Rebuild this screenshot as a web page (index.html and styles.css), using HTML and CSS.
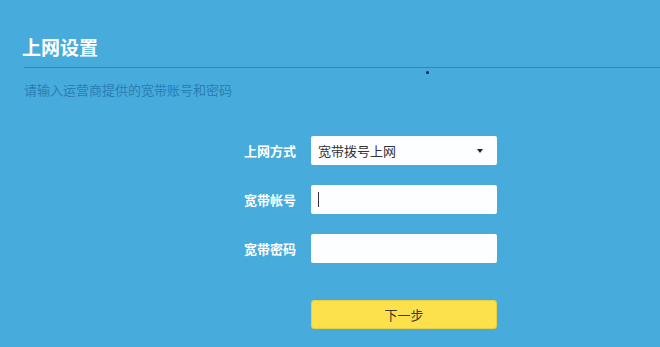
FILE: index.html
```html
<!DOCTYPE html>
<html lang="zh-CN">
<head>
<meta charset="utf-8">
<title>上网设置</title>
<link rel="stylesheet" href="styles.css">
</head>
<body>
<div class="page">
  <h1 class="title">上网设置</h1>
  <div class="rule"></div>
  <span class="dot"></span>
  <p class="hint">请输入运营商提供的宽带账号和密码</p>
  <form class="form">
    <label class="label">上网方式</label>
    <div class="field select">
      <span class="select-text">宽带拨号上网</span>
      <span class="arrow"></span>
    </div>
    <label class="label">宽带帐号</label>
    <div class="field"><span class="caret"></span></div>
    <label class="label">宽带密码</label>
    <div class="field"></div>
    <span class="spacer"></span>
    <button type="button" class="next">下一步</button>
  </form>
</div>
</body>
</html>
```

FILE: styles.css
```css
html, body {
  margin: 0;
  padding: 0;
  background: #47acdc;
  font-family: "Noto Sans CJK SC", "Noto Sans", sans-serif;
}

.page {
  position: relative;
  width: 660px;
  height: 347px;
  overflow: hidden;
}

.title {
  margin: 0;
  padding: 34px 0 0 22px;
  font-size: 19px;
  line-height: 26px;
  font-weight: 700;
  color: #ffffff;
}

.rule {
  margin: 7px 0 0 24px;
  border-top: 1px solid #2a88bb;
}

.dot {
  position: absolute;
  left: 426px;
  top: 71px;
  width: 3px;
  height: 3px;
  border-radius: 50%;
  background: #10294a;
}

.hint {
  margin: 12px 0 0 24px;
  font-size: 13px;
  line-height: 20px;
  color: #2b7db2;
}

.form {
  margin: 36px 0 0 216px;
  display: grid;
  grid-template-columns: 80px 186px;
  grid-auto-rows: 29px;
  column-gap: 15px;
  row-gap: 20px;
  align-items: center;
}

.label {
  text-align: right;
  font-size: 13px;
  font-weight: 700;
  color: #ffffff;
}

.field {
  box-sizing: border-box;
  height: 29px;
  background: #fdfeff;
  border-radius: 2px;
  display: flex;
  align-items: center;
  padding: 0 7px;
}

.select {
  justify-content: space-between;
}

.select-text {
  font-size: 13px;
  color: #333333;
}

.arrow {
  width: 0;
  height: 0;
  margin-right: 7px;
  border-left: 3px solid transparent;
  border-right: 3px solid transparent;
  border-top: 4px solid #222222;
}

.caret {
  width: 1px;
  height: 15px;
  background: #333333;
}

.next {
  margin-top: 17px;
  height: 29px;
  border: 1px solid #e8cf3f;
  border-radius: 3px;
  background: #fde14c;
  font-family: "Noto Sans CJK SC", "Noto Sans", sans-serif;
  font-size: 13px;
  color: #3a3a2a;
  padding: 0;
  align-self: start;
}
```
